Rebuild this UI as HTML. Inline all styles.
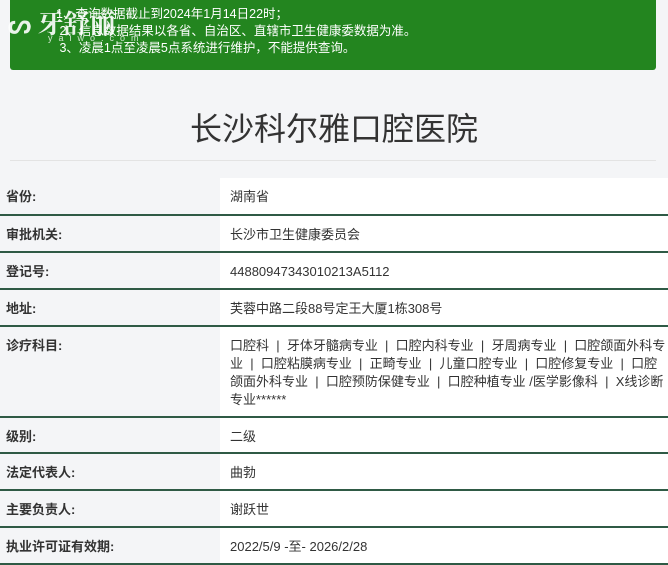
<!DOCTYPE html>
<html><head><meta charset="utf-8"><style>
*{margin:0;padding:0;box-sizing:border-box}
body{width:668px;height:563px;overflow:hidden;background:#f4f5f7;font-family:"Liberation Sans","Noto Sans CJK SC",sans-serif;color:#333;position:relative}
.notice{position:absolute;left:10px;top:0;width:646px;height:70px;background:#23851f;border-radius:0 0 3px 3px;color:#fff;font-size:12.5px;line-height:17px;padding:6px 0 0 46px}
.logo{position:absolute;left:8px;top:4px;color:#fff;font-size:26px;font-weight:bold;opacity:.9;font-family:"Noto Serif CJK SC",serif}
.logo2{position:absolute;left:48px;top:33px;color:#fff;font-size:9px;letter-spacing:6px;opacity:.8}
h1{position:absolute;left:0;width:668px;top:104px;text-align:center;font-weight:normal;font-size:32px;color:#333}
.hr{position:absolute;left:10px;width:646px;top:160px;border-top:1px solid #e3e3e3}
table{position:absolute;left:0;top:178px;width:668px;border-collapse:collapse;font-size:13px}
td{border-bottom:2px solid #2f5a45;vertical-align:top;padding-top:10px;line-height:18px}
td.l{width:220px;padding-left:6px;font-weight:bold;color:#333;background:#f4f5f7}
td.v{background:#fff;padding-left:10px;color:#333}
</style></head><body>
<div class="notice">1、查询数据截止到2024年1月14日22时；<br>&nbsp;2、信息数据结果以各省、自治区、直辖市卫生健康委数据为准。<br>&nbsp;3、凌晨1点至凌晨5点系统进行维护，不能提供查询。</div>
<div class="logo">ᔕ 牙舒丽</div>
<div class="logo2">yaiwo.com</div>
<h1>长沙科尔雅口腔医院</h1>
<div class="hr"></div>
<table>
<tr style="height:37px"><td class="l">省份:</td><td class="v">湖南省</td></tr>
<tr style="height:37px"><td class="l">审批机关:</td><td class="v">长沙市卫生健康委员会</td></tr>
<tr style="height:37px"><td class="l">登记号:</td><td class="v">44880947343010213A5112</td></tr>
<tr style="height:37px"><td class="l">地址:</td><td class="v">芙蓉中路二段88号定王大厦1栋308号</td></tr>
<tr style="height:91px"><td class="l">诊疗科目:</td><td class="v" style="white-space:nowrap">口腔科&nbsp;&nbsp;|&nbsp;&nbsp;牙体牙髓病专业&nbsp;&nbsp;|&nbsp;&nbsp;口腔内科专业&nbsp;&nbsp;|&nbsp;&nbsp;牙周病专业&nbsp;&nbsp;|&nbsp;&nbsp;口腔颌面外科专<br>业&nbsp;&nbsp;|&nbsp;&nbsp;口腔粘膜病专业&nbsp;&nbsp;|&nbsp;&nbsp;正畸专业&nbsp;&nbsp;|&nbsp;&nbsp;儿童口腔专业&nbsp;&nbsp;|&nbsp;&nbsp;口腔修复专业&nbsp;&nbsp;|&nbsp;&nbsp;口腔<br>颌面外科专业&nbsp;&nbsp;|&nbsp;&nbsp;口腔预防保健专业&nbsp;&nbsp;|&nbsp;&nbsp;口腔种植专业 /医学影像科&nbsp;&nbsp;|&nbsp;&nbsp;X线诊断<br>专业******</td></tr>
<tr style="height:36px"><td class="l">级别:</td><td class="v">二级</td></tr>
<tr style="height:37px"><td class="l">法定代表人:</td><td class="v">曲勃</td></tr>
<tr style="height:37px"><td class="l">主要负责人:</td><td class="v">谢跃世</td></tr>
<tr style="height:37px"><td class="l">执业许可证有效期:</td><td class="v">2022/5/9 -至- 2026/2/28</td></tr>
</table>
</body></html>
